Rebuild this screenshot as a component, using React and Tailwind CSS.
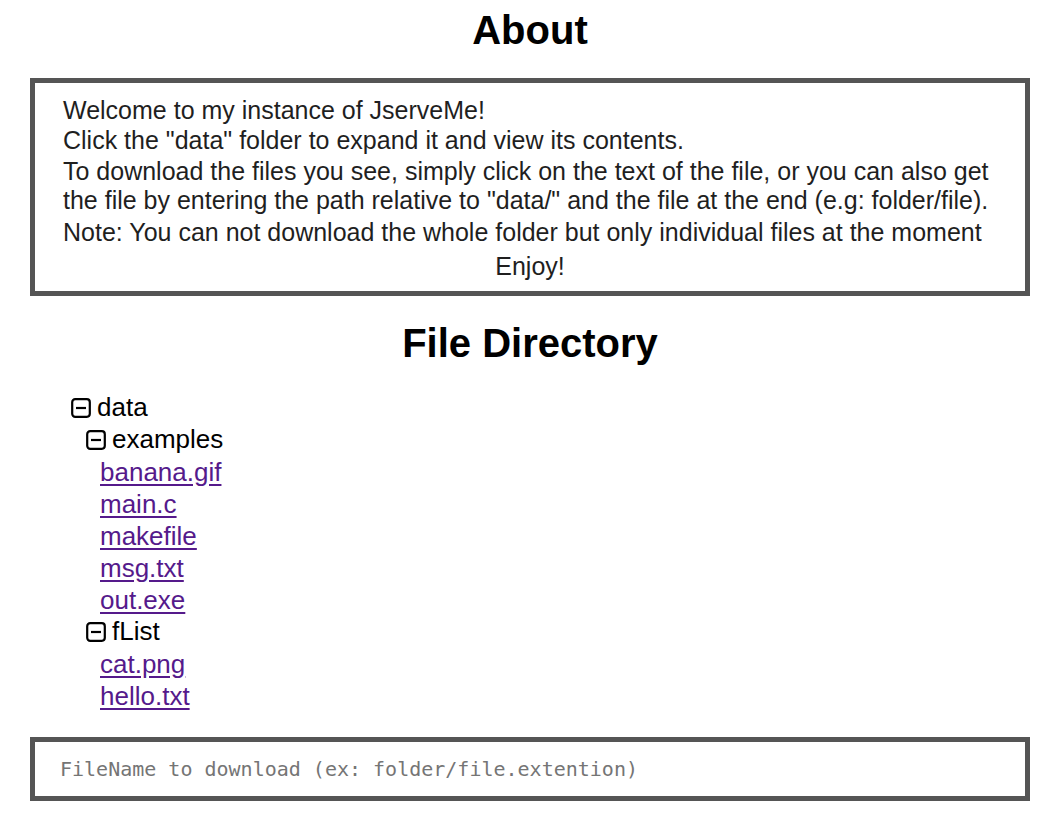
const tree = [
  {
    name: "examples",
    files: ["banana.gif", "main.c", "makefile", "msg.txt", "out.exe"],
  },
  {
    name: "fList",
    files: ["cat.png", "hello.txt"],
  },
];

const MinusBox = () => (
  <svg width="20" height="20" className="block shrink-0" viewBox="0 0 20 20" fill="none">
    <rect x="1.2" y="1.2" width="17.6" height="17.6" rx="3" stroke="#000" strokeWidth="2.2" />
    <path d="M5 10h10" stroke="#000" strokeWidth="2.2" />
  </svg>
);

const FileLink = ({ name }) => (
  <div className="h-[32px] flex items-center pl-[100px]">
    <a href="#" className="text-[#551a8b] underline underline-offset-[3px]">
      {name}
    </a>
  </div>
);

export default function App() {
  return (
    <div className="min-h-screen bg-white text-black font-['Liberation_Sans',Arial,sans-serif] pt-[7px]">
      <h1 className="text-[40px] leading-[46px] font-bold text-center">About</h1>

      <div className="mx-[30px] mt-[25px] border-[5px] border-[#555] pt-[12px] pb-[10px] px-[28px] text-[25px] leading-[30px] text-[#1f1f1f]">
        <div>Welcome to my instance of JserveMe!</div>
        <div>Click the "data" folder to expand it and view its contents.</div>
        <div className="mt-[2px] leading-[29px]">
          To download the files you see, simply click on the text of the file, or you can also get the file by entering the path relative to "data/" and the file at the end (e.g: folder/file).
        </div>
        <div className="mt-[2px]">
          Note: You can not download the whole folder but only individual files at the moment
        </div>
        <div className="mt-[4px] text-center">Enjoy!</div>
      </div>

      <h2 className="mt-[24px] text-[40px] leading-[46px] font-bold text-center">File Directory</h2>

      <div className="mt-[26px] mb-[-1px] text-[26px]">
        <div className="h-[32px] flex items-center gap-[6px] pl-[71px]">
          <MinusBox />
          <span className="pb-[1px]">data</span>
        </div>
        {tree.map((folder) => (
          <div key={folder.name}>
            <div className="h-[32px] flex items-center gap-[6px] pl-[86px]">
              <MinusBox />
              <span className="pb-[1px]">{folder.name}</span>
            </div>
            {folder.files.map((f) => (
              <FileLink key={f} name={f} />
            ))}
          </div>
        ))}
      </div>

      <div className="mx-[30px] mt-[26px] mb-[23px] border-[5px] border-[#555] h-[64px] flex items-center">
        <input
          type="text"
          placeholder="FileName to download (ex: folder/file.extention)"
          className="w-full h-full pl-[25px] outline-none text-[20px] font-['DejaVu_Sans_Mono',monospace] placeholder:text-[#757575] text-[#333]"
        />
      </div>
    </div>
  );
}
